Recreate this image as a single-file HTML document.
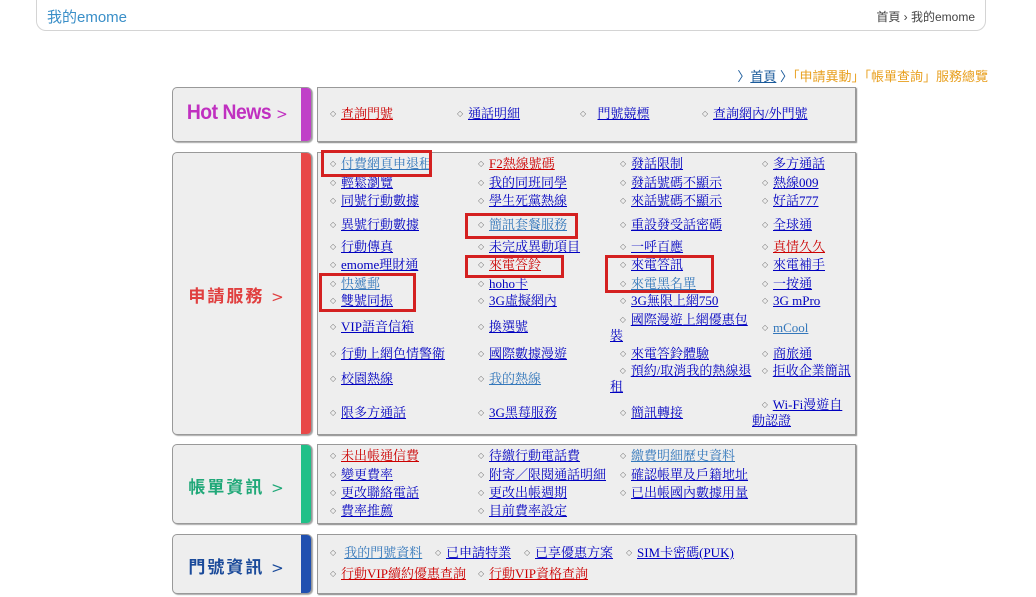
<!DOCTYPE html>
<html><head><meta charset="utf-8"><style>
*{margin:0;padding:0;box-sizing:border-box}
body{width:1036px;height:597px;background:#fff;position:relative;overflow:hidden;font-family:"Liberation Serif","Noto Serif CJK TC","Noto Serif CJK SC",serif;font-size:13px}
.top{position:absolute;left:36px;top:0;width:950px;height:31px;border:1px solid #d4d4d4;border-top:none;border-radius:0 0 10px 10px}
.top .t{position:absolute;left:10px;top:6px;font:15px "Liberation Sans","Noto Sans CJK TC",sans-serif;color:#3a8fc8}
.top .r{position:absolute;right:10px;top:8px;font:12px "Liberation Sans","Noto Sans CJK TC",sans-serif;color:#444}
.bc{position:absolute;right:48px;top:66px;font:13px "Liberation Sans","Noto Sans CJK TC",sans-serif;color:#e8a020}
.bc a{color:#1a5a9a}
.bc b{color:#1a5a9a;font-weight:normal}
.lb{position:absolute;left:172px;width:140px;background:#eee;border:1px solid #999;border-radius:5px;box-shadow:1px 1px 1px #aaa;overflow:hidden}
.lb .bar{position:absolute;right:0;top:0;bottom:0;width:10px}
.lb .lbl{position:absolute;left:0;right:10px;text-align:center;font:bold 17px "Liberation Sans","Noto Sans CJK TC",sans-serif;letter-spacing:2px}
.lbl i{font-style:normal;font-weight:normal;font-family:"DejaVu Sans",sans-serif;font-size:15px}
.rb{position:absolute;left:317px;width:539px;background:#eee;border:1px solid #999;box-shadow:1px 1px 1px #888}
.i{position:absolute;line-height:16px;white-space:nowrap}
.i s{text-decoration:none;display:inline-block;width:11px;color:#777;font-size:8px;vertical-align:2px;font-family:"DejaVu Sans",sans-serif}
a{color:#0000c0;text-decoration:underline}
a.r{color:#cc0000}
a.l{color:#3377bb}
.box{position:absolute;border:3px solid #d42020}
</style></head><body>
<div class="top"><span class="t">我的emome</span><span class="r">首頁 › 我的emome</span></div>
<div class="bc"><b>〉</b><a>首頁</a> <b>〉</b>「申請異動」「帳單查詢」服務總覽</div>

<div class="lb" style="top:87px;height:55px"><div class="bar" style="background:#c040c8"></div><div class="lbl" style="top:13px;color:#c030c0;letter-spacing:-0.5px;font-size:21px;transform:scaleX(0.92)">Hot News <i>&gt;</i></div></div>
<div class="rb" style="top:87px;height:55px"></div>
<div class="lb" style="top:152px;height:283px"><div class="bar" style="background:#e84848"></div><div class="lbl" style="top:129px;color:#e04040">申請服務 <i>&gt;</i></div></div>
<div class="rb" style="top:152px;height:283px"></div>
<div class="lb" style="top:444px;height:80px"><div class="bar" style="background:#20c088"></div><div class="lbl" style="top:28px;color:#20a878">帳單資訊 <i>&gt;</i></div></div>
<div class="rb" style="top:444px;height:80px"></div>
<div class="lb" style="top:534px;height:60px"><div class="bar" style="background:#2050b0"></div><div class="lbl" style="top:18px;color:#1a4a9a">門號資訊 <i>&gt;</i></div></div>
<div class="rb" style="top:534px;height:60px"></div>

<div class="i" style="left:330px;top:106px"><s>◇</s><a class="r">查詢門號</a></div>
<div class="i" style="left:457px;top:106px"><s>◇</s><a>通話明細</a></div>
<div class="i" style="left:580px;top:106px"><s>◇</s>&nbsp;&nbsp;<a>門號競標</a></div>
<div class="i" style="left:702px;top:106px"><s>◇</s><a>查詢網內/外門號</a></div>

<div class="i" style="left:330px;top:156px"><s>◇</s><a class="l">付費網頁申退租</a></div>
<div class="i" style="left:330px;top:175px"><s>◇</s><a>輕鬆瀏覽</a></div>
<div class="i" style="left:330px;top:193px"><s>◇</s><a>同號行動數據</a></div>
<div class="i" style="left:330px;top:217px"><s>◇</s><a>異號行動數據</a></div>
<div class="i" style="left:330px;top:239px"><s>◇</s><a>行動傳真</a></div>
<div class="i" style="left:330px;top:257px"><s>◇</s><a>emome理財通</a></div>
<div class="i" style="left:330px;top:276px"><s>◇</s><a class="l">快遞郵</a></div>
<div class="i" style="left:330px;top:293px"><s>◇</s><a>雙號同振</a></div>
<div class="i" style="left:330px;top:319px"><s>◇</s><a>VIP語音信箱</a></div>
<div class="i" style="left:330px;top:346px"><s>◇</s><a>行動上網色情警衛</a></div>
<div class="i" style="left:330px;top:371px"><s>◇</s><a>校園熱線</a></div>
<div class="i" style="left:330px;top:405px"><s>◇</s><a>限多方通話</a></div>

<div class="i" style="left:478px;top:156px"><s>◇</s><a class="r">F2熱線號碼</a></div>
<div class="i" style="left:478px;top:175px"><s>◇</s><a>我的同班同學</a></div>
<div class="i" style="left:478px;top:193px"><s>◇</s><a>學生死黨熱線</a></div>
<div class="i" style="left:478px;top:217px"><s>◇</s><a class="l">簡訊套餐服務</a></div>
<div class="i" style="left:478px;top:239px"><s>◇</s><a>未完成異動項目</a></div>
<div class="i" style="left:478px;top:257px"><s>◇</s><a class="r">來電答鈴</a></div>
<div class="i" style="left:478px;top:276px"><s>◇</s><a>hoho卡</a></div>
<div class="i" style="left:478px;top:293px"><s>◇</s><a>3G虛擬網內</a></div>
<div class="i" style="left:478px;top:319px"><s>◇</s><a>換選號</a></div>
<div class="i" style="left:478px;top:346px"><s>◇</s><a>國際數據漫遊</a></div>
<div class="i" style="left:478px;top:371px"><s>◇</s><a class="l">我的熱線</a></div>
<div class="i" style="left:478px;top:405px"><s>◇</s><a>3G黑莓服務</a></div>

<div class="i" style="left:620px;top:156px"><s>◇</s><a>發話限制</a></div>
<div class="i" style="left:620px;top:175px"><s>◇</s><a>發話號碼不顯示</a></div>
<div class="i" style="left:620px;top:193px"><s>◇</s><a>來話號碼不顯示</a></div>
<div class="i" style="left:620px;top:217px"><s>◇</s><a>重設發受話密碼</a></div>
<div class="i" style="left:620px;top:239px"><s>◇</s><a>一呼百應</a></div>
<div class="i" style="left:620px;top:257px"><s>◇</s><a>來電答訊</a></div>
<div class="i" style="left:620px;top:276px"><s>◇</s><a class="l">來電黑名單</a></div>
<div class="i" style="left:620px;top:293px"><s>◇</s><a>3G無限上網750</a></div>
<div class="i" style="left:610px;top:312px;width:142px;white-space:normal">&nbsp;&nbsp;&nbsp;<s>◇</s><a>國際漫遊上網優惠包裝</a></div>
<div class="i" style="left:620px;top:346px"><s>◇</s><a>來電答鈴體驗</a></div>
<div class="i" style="left:610px;top:363px;width:144px;white-space:normal">&nbsp;&nbsp;&nbsp;<s>◇</s><a>預約/取消我的熱線退租</a></div>
<div class="i" style="left:620px;top:405px"><s>◇</s><a>簡訊轉接</a></div>

<div class="i" style="left:762px;top:156px"><s>◇</s><a>多方通話</a></div>
<div class="i" style="left:762px;top:175px"><s>◇</s><a>熱線009</a></div>
<div class="i" style="left:762px;top:193px"><s>◇</s><a>好話777</a></div>
<div class="i" style="left:762px;top:217px"><s>◇</s><a>全球通</a></div>
<div class="i" style="left:762px;top:239px"><s>◇</s><a class="r">真情久久</a></div>
<div class="i" style="left:762px;top:257px"><s>◇</s><a>來電補手</a></div>
<div class="i" style="left:762px;top:276px"><s>◇</s><a>一按通</a></div>
<div class="i" style="left:762px;top:293px"><s>◇</s><a>3G mPro</a></div>
<div class="i" style="left:762px;top:320px"><s>◇</s><a class="l">mCool</a></div>
<div class="i" style="left:762px;top:346px"><s>◇</s><a>商旅通</a></div>
<div class="i" style="left:752px;top:363px;width:102px;white-space:normal">&nbsp;&nbsp;&nbsp;<s>◇</s><a>拒收企業簡訊</a></div>
<div class="i" style="left:752px;top:397px;width:102px;white-space:normal">&nbsp;&nbsp;&nbsp;<s>◇</s><a>Wi-Fi漫遊自動認證</a></div>

<div class="box" style="left:321px;top:150px;width:111px;height:27px"></div>
<div class="box" style="left:465px;top:213px;width:113px;height:26px"></div>
<div class="box" style="left:465px;top:255px;width:99px;height:23px"></div>
<div class="box" style="left:319px;top:273px;width:97px;height:39px"></div>
<div class="box" style="left:605px;top:255px;width:109px;height:38px"></div>

<div class="i" style="left:330px;top:448px"><s>◇</s><a class="r">未出帳通信費</a></div>
<div class="i" style="left:330px;top:467px"><s>◇</s><a>變更費率</a></div>
<div class="i" style="left:330px;top:485px"><s>◇</s><a>更改聯絡電話</a></div>
<div class="i" style="left:330px;top:503px"><s>◇</s><a>費率推薦</a></div>
<div class="i" style="left:478px;top:448px"><s>◇</s><a>待繳行動電話費</a></div>
<div class="i" style="left:478px;top:467px"><s>◇</s><a>附寄／限閱通話明細</a></div>
<div class="i" style="left:478px;top:485px"><s>◇</s><a>更改出帳週期</a></div>
<div class="i" style="left:478px;top:503px"><s>◇</s><a>目前費率設定</a></div>
<div class="i" style="left:620px;top:448px"><s>◇</s><a class="l">繳費明細歷史資料</a></div>
<div class="i" style="left:620px;top:467px"><s>◇</s><a>確認帳單及戶籍地址</a></div>
<div class="i" style="left:620px;top:485px"><s>◇</s><a>已出帳國內數據用量</a></div>

<div class="i" style="left:330px;top:545px"><s>◇</s>&nbsp;<a class="l">我的門號資料</a></div>
<div class="i" style="left:435px;top:545px"><s>◇</s><a>已申請特業</a></div>
<div class="i" style="left:524px;top:545px"><s>◇</s><a>已享優惠方案</a></div>
<div class="i" style="left:626px;top:545px"><s>◇</s><a>SIM卡密碼(PUK)</a></div>
<div class="i" style="left:330px;top:566px"><s>◇</s><a class="r">行動VIP續約優惠查詢</a></div>
<div class="i" style="left:478px;top:566px"><s>◇</s><a class="r">行動VIP資格查詢</a></div>
</body></html>
